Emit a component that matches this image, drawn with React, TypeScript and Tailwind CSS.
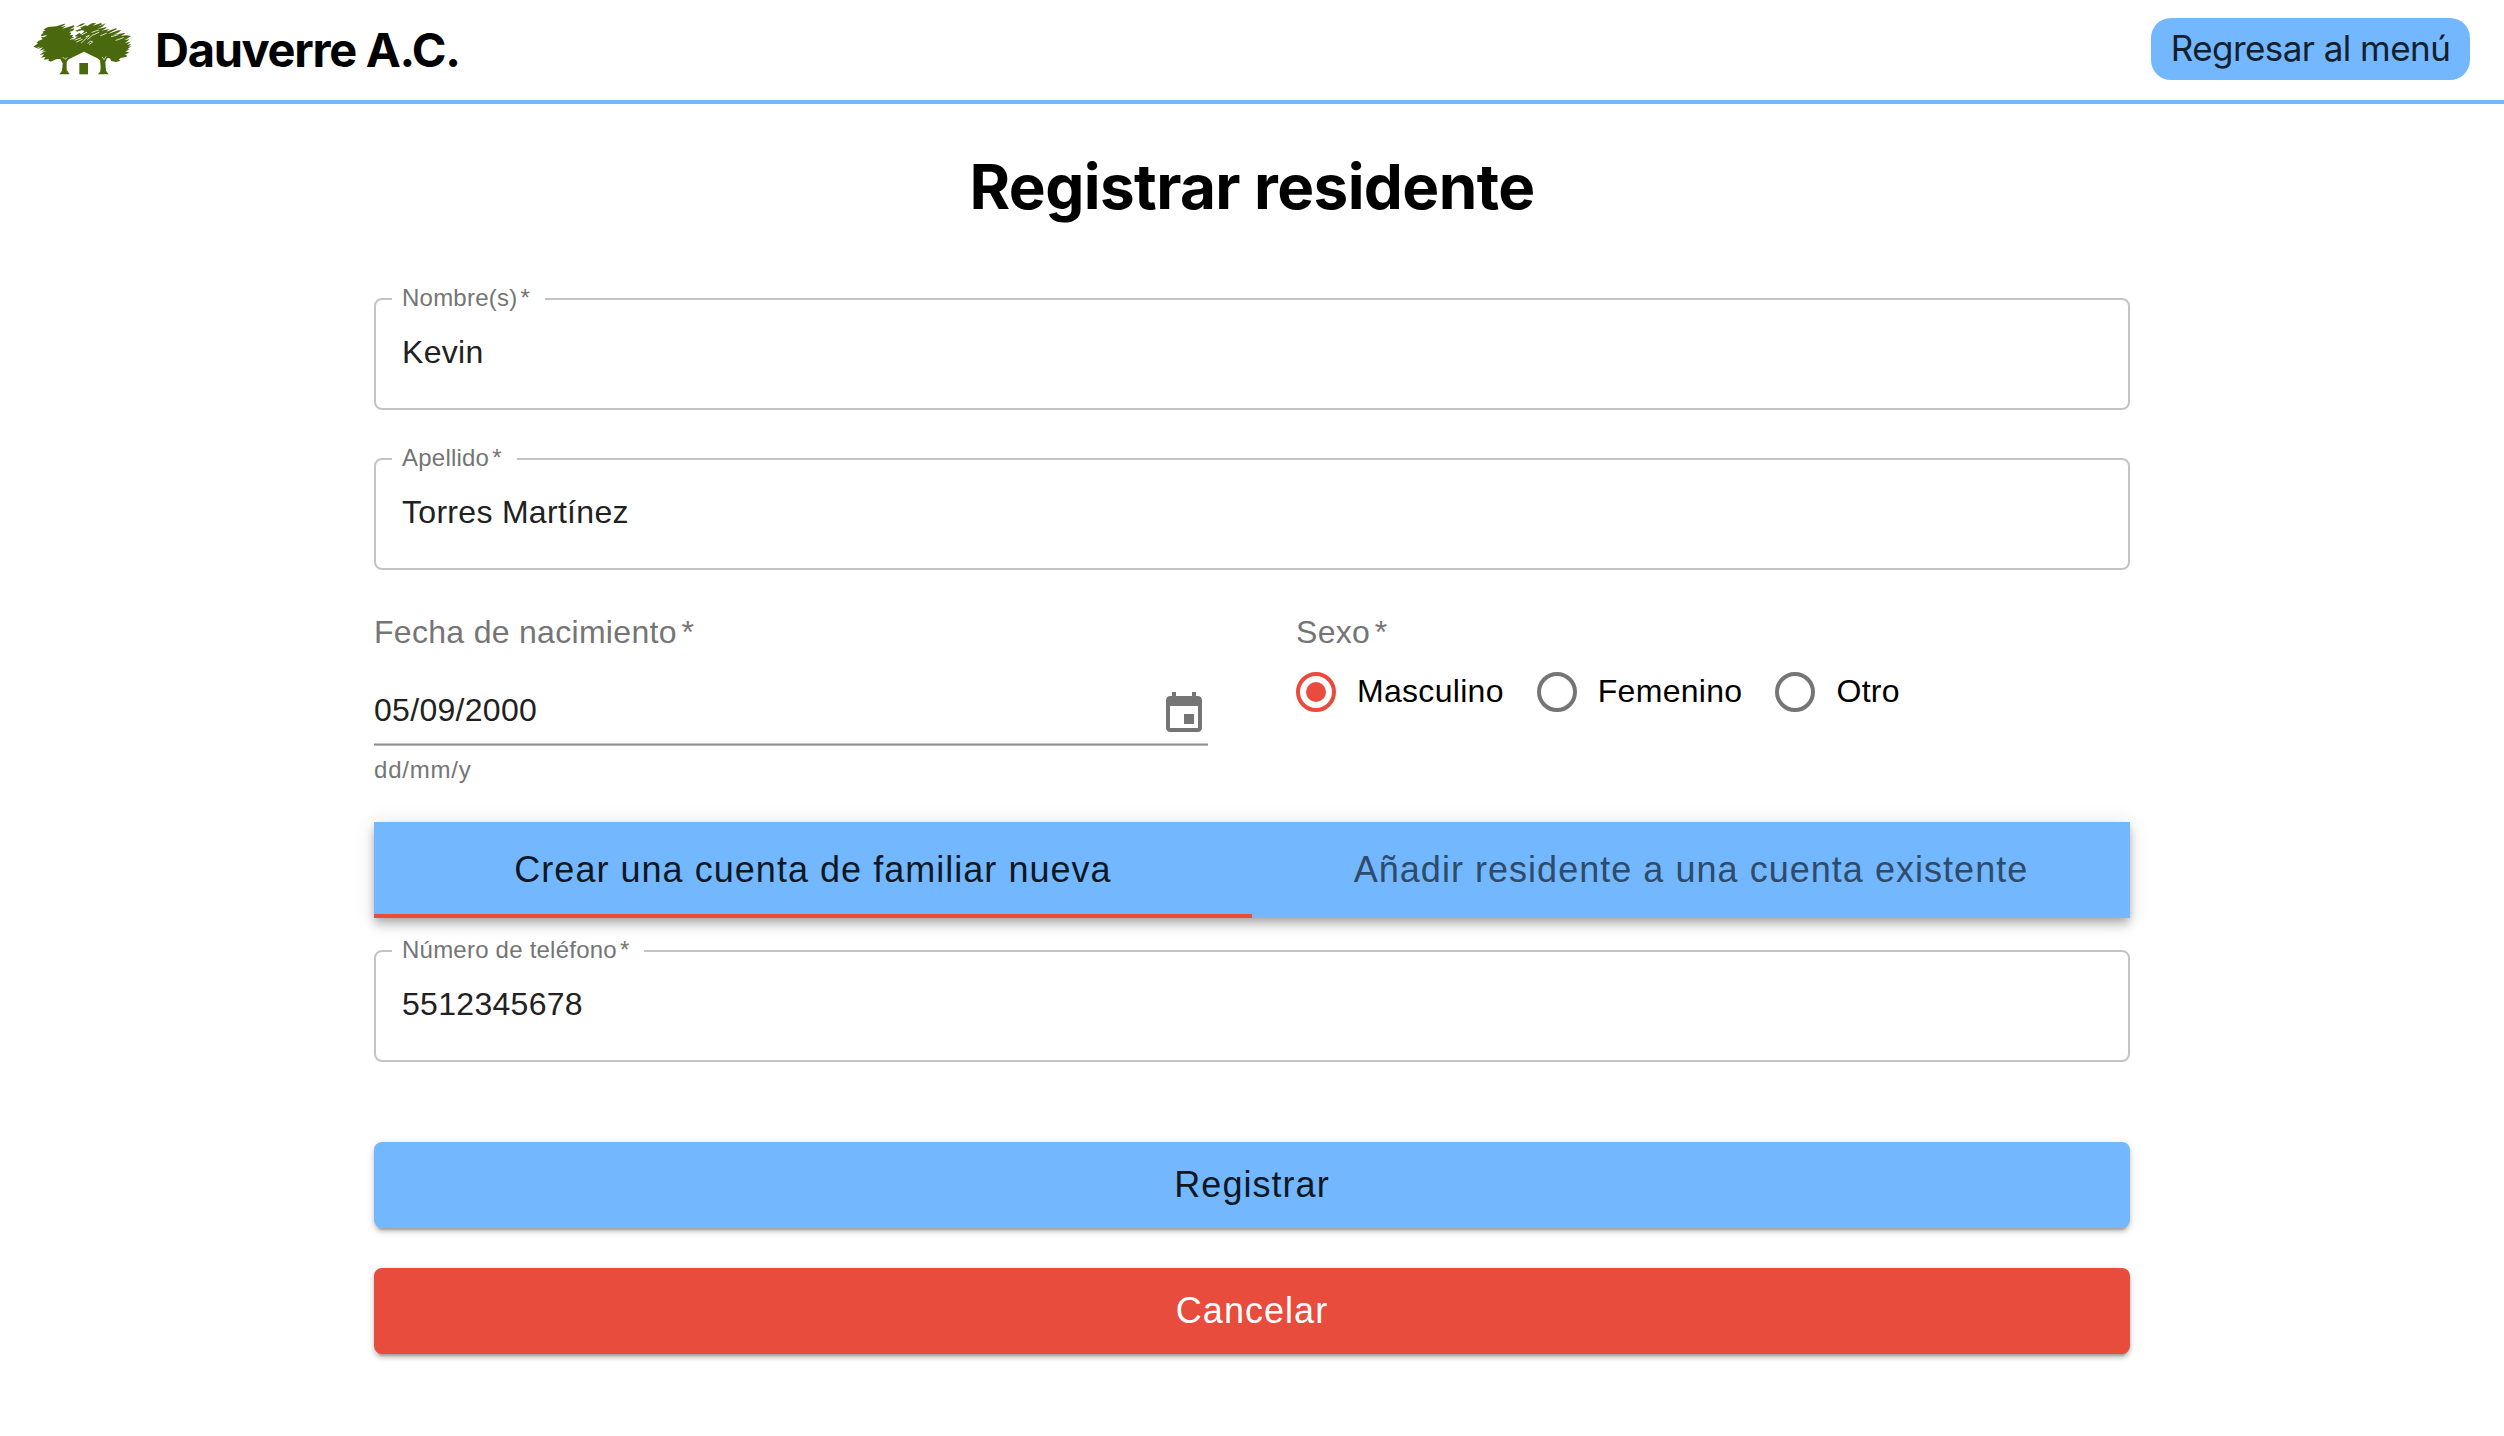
import React from "react";

function Logo() {
  return (
    <svg viewBox="0 0 345 210" className="h-[70px] w-[115px]" aria-label="Dauverre">
      <g fill="#4a680e">
        <path d="M28 98L43 88L37 88L44 80L56 76L51 70L62 69L70 63L51 67L53 60L59 57L55 54L64 49L59 46L72 39L97 37L121 29L124 31L110 39L125 36L115 44L133 39L150 34L151 38L136 47L150 43L149 49L135 55L142 56L138 64L147 63L144 70L151 68L145 78L157 71L153 65L166 57L172 61L182 51L174 49L160 52L173 43L168 41L184 34L190 36L203 28L217 27L207 35L231 27L234 31L219 39L246 28L235 38L222 45L248 39L244 44L232 50L256 45L247 53L263 47L276 43L279 45L260 55L252 60L283 49L292 49L282 56L268 62L288 59L304 56L300 61L290 66L306 64L321 66L311 73L301 78L317 76L310 82L302 87L320 83L309 92L321 90L313 98L322 96L310 106L317 105L304 113L316 114L307 121L300 122L308 123L308 128L290 132L284 137L290 140L276 144L262 141L258 133L249 133L244 144L246 170L254 181L222 181L229 172L230 158L228 139L220 133L180 113L134 136L128 144L128 168L137 181L106 181L114 170L116 148L109 135L96 136L80 143L72 139L76 135L59 137L65 128L51 131L61 121L47 122L59 114L69 110L53 113L63 105L46 110L57 100L37 106L51 97L38 102Z" />
        <path d="M155 40L172 29L184 27L176 34Z" />
        <path d="M154 50L168 45L174 44L160 53Z" />
        <path d="M166 147H192V181H166Z" />
      </g>
      <g stroke="#fff" strokeWidth="2.4" strokeLinecap="round" fill="none">
        <path d="M140 76L159 68M153 78L170 72M158 84L175 76M174 62L188 55M172 87L196 64L186 68M191 76L205 64L225 55M204 55L224 48M196 91L206 84L200 81M192 88L198 82M230 65L247 58M262 68L282 62M276 79L298 71" />
        <path d="M117 130L123 136L130 131M235 130L240 137L246 128" strokeWidth="2" />
      </g>
    </svg>
  );
}

function RequiredMark() {
  return <span className="-ml-0.5">{"\u2009*"}</span>;
}

type FieldProps = { label: string; value: string; className?: string };

function OutlinedField({ label, value, className = "" }: FieldProps) {
  return (
    <fieldset className={`h-[123px] rounded-lg border-2 border-[#c4c4c4] ${className}`}>
      <legend className="ml-4 h-6 pl-2.5 pr-[15px] text-2xl leading-[22px] tracking-[0.225px] text-[#757575]">
        {label}
        <RequiredMark />
      </legend>
      <div className="ml-[26px] mt-[21px] h-10 text-[32px] leading-10 tracking-[0.3px] text-[#212121]">{value}</div>
    </fieldset>
  );
}

function Radio({ label, checked = false, className = "" }: { label: string; checked?: boolean; className?: string }) {
  return (
    <label className={`flex h-12 items-center ${className}`}>
      <svg viewBox="0 0 24 24" className={checked ? "size-12 text-[#e84c3d]" : "size-12 text-[#757575]"}>
        <circle cx="12" cy="12" r="9" fill="none" stroke="currentColor" strokeWidth="2" />
        {checked && <circle cx="12" cy="12" r="5" fill="currentColor" />}
      </svg>
      <span className="mb-0.5 ml-[17px] text-[32px] leading-10 tracking-[0.3px] text-black">{label}</span>
    </label>
  );
}

const buttonClass =
  "flex h-[86px] w-full items-center justify-center rounded-lg text-4xl tracking-[1.03px] shadow-[0_6px_2px_-4px_rgba(0,0,0,0.2),0_4px_4px_0_rgba(0,0,0,0.14),0_2px_10px_0_rgba(0,0,0,0.12)]";

export default function App() {
  return (
    <div className="h-[1436px] w-[2504px] overflow-hidden bg-white font-['Liberation_Sans',Arial,sans-serif]">
      <header className="flex h-[104px] items-center justify-between border-b-4 border-[#73b7ff] pb-0.5 pl-6 pr-[34px] font-['Inter',sans-serif]">
        <div className="flex items-center">
          <Logo />
          <span className="ml-4 text-[47px] font-bold leading-none tracking-[-1.3px] text-black">Dauverre A.C.</span>
        </div>
        <button className="flex h-[62px] w-[319px] items-center justify-center whitespace-nowrap rounded-[20px] bg-[#73b7ff] pb-0.5 text-[35px] tracking-[-0.55px] text-[#14202c]">
          Regresar al menú
        </button>
      </header>

      <main className="mx-auto w-[1756px]">
        <h1 className="mt-[43px] whitespace-nowrap text-center font-['Inter',sans-serif] text-[62px] font-bold leading-[80px] tracking-[-0.6px] text-black">
          Registrar residente
        </h1>

        <OutlinedField label="Nombre(s)" value="Kevin" className="mt-[60px]" />
        <OutlinedField label="Apellido" value="Torres Martínez" className="mt-[37px]" />

        <div className="mt-[46px] flex justify-between">
          <div className="w-[834px]">
            <div className="h-8 text-[32px] leading-8 tracking-[0.3px] text-[#757575]">
              Fecha de nacimiento
              <RequiredMark />
            </div>
            <div className="mt-[42px] flex h-[53px] items-start justify-between">
              <span className="text-[32px] leading-[41px] tracking-[0.3px] text-[#212121]">05/09/2000</span>
              <svg viewBox="0 0 24 24" className="size-12" fill="#757575">
                <path d="M17 12h-5v5h5v-5zM16 1v2H8V1H6v2H5c-1.11 0-1.99.9-1.99 2L3 19c0 1.1.89 2 2 2h14c1.1 0 2-.9 2-2V5c0-1.1-.9-2-2-2h-1V1h-2zm3 18H5V8h14v11z" />
              </svg>
            </div>
            <div className="h-[3px] border-b border-t border-b-[#b8b8b8] border-t-[#c8c8c8] bg-[#8f8f8f]" />
            <div className="mt-3 h-6 text-2xl leading-6 tracking-[0.8px] text-[#757575]">dd/mm/y</div>
          </div>
          <div className="w-[838px]">
            <div className="ml-1 h-8 text-[32px] leading-8 tracking-[0.3px] text-[#757575]">
              Sexo
              <RequiredMark />
            </div>
            <div className="mt-5 flex">
              <Radio label="Masculino" checked />
              <Radio label="Femenino" className="ml-[29px]" />
              <Radio label="Otro" className="ml-[29px]" />
            </div>
          </div>
        </div>

        <div className="mt-10 grid h-24 grid-cols-2 bg-[#73b7ff] text-4xl tracking-[1.03px] shadow-[0_4px_8px_-2px_rgba(0,0,0,0.2),0_8px_10px_0_rgba(0,0,0,0.14),0_2px_20px_0_rgba(0,0,0,0.12)]">
          <button className="border-b-4 border-[#e84c3d] pt-1 text-[#0f1822]">Crear una cuenta de familiar nueva</button>
          <button className="text-[#2e4b69]">Añadir residente a una cuenta existente</button>
        </div>

        <OutlinedField label="Número de teléfono" value="5512345678" className="mt-[21px]" />

        <div className="mt-20 flex flex-col gap-10">
          <button className={`${buttonClass} bg-[#73b7ff] text-[#0f1822]`}>Registrar</button>
          <button className={`${buttonClass} bg-[#e84c3d] text-white`}>Cancelar</button>
        </div>
      </main>
    </div>
  );
}
